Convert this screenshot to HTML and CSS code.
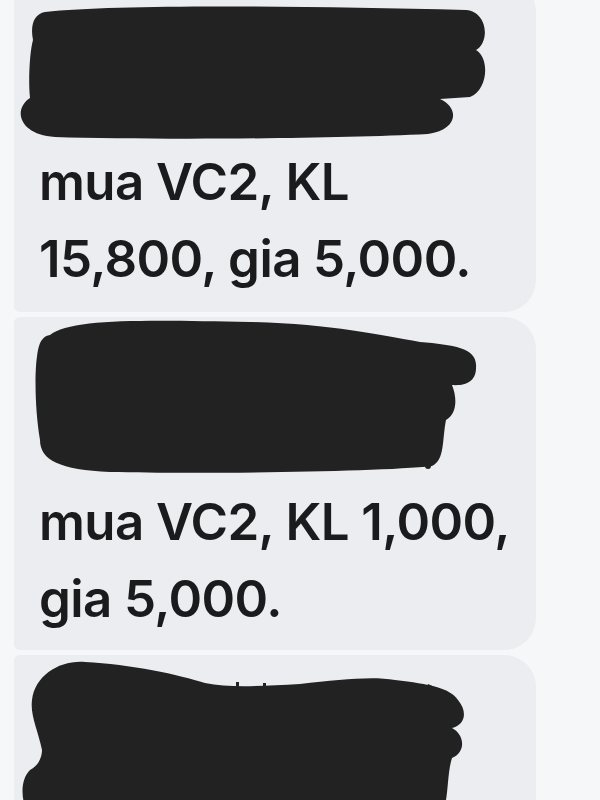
FILE: index.html
```html
<!DOCTYPE html>
<html lang="en">
<head>
  <meta charset="UTF-8" />
  <meta name="viewport" content="width=device-width, initial-scale=1.0"/>
  <title>Messages</title>
  <link rel="stylesheet" href="styles.css">
</head>
<body>
  <div class="thread">

    <div class="bubble first">
      <!-- redacted sender line -->
      <svg class="scribble s1" width="522" height="163" viewBox="0 0 522 163">
        <g transform="translate(-14,20)">
          <path d="M45 12 C120 4,300 6,466 10 C488 12,490 42,476 50 C490 58,488 90,470 97 L440 99 C460 108,458 130,428 134 C330 139,150 140,55 137 C20 135,12 110,30 98 C28 80,30 50,33 40 C30 25,34 14,45 12 Z"/>
        </g>
      </svg>
      <p class="msg">mua VC2, KL<br>15,800, gia 5,000.</p>
    </div>

    <div class="bubble middle">
      <svg class="scribble s2" width="522" height="166" viewBox="0 0 522 166">
        <g transform="translate(-14,-317)">
          <path d="M50 335 C70 318,150 320,250 322 C330 324,380 335,420 342 C455 345,478 348,476 368 C476 382,465 386,452 385 C458 400,456 415,446 420 C442 440,445 460,432 466 C380 472,200 474,110 472 C60 470,40 460,40 440 C35 410,34 370,38 350 C40 340,44 336,50 335 Z"/>
          <circle cx="428" cy="466" r="3"/>
        </g>
      </svg>
      <p class="msg">mua VC2, KL 1,000,<br>gia 5,000.</p>
    </div>

    <div class="bubble last">
      <svg class="scribble s3" width="522" height="160" viewBox="0 0 522 160">
        <g transform="translate(-14,-655)">
          <path d="M32 700 C35 675,60 660,85 662 C130 664,180 675,205 683 C230 688,260 686,300 684 C340 680,370 676,395 680 C430 684,450 688,458 700 C468 712,465 725,452 728 C465 735,466 752,452 758 C448 770,448 790,446 800 L446 820 L30 820 C20 800,20 780,30 770 C40 765,42 755,42 750 C38 730,30 715,32 700 Z"/>
          <rect x="236" y="682" width="3" height="8"/>
          <rect x="263" y="683" width="3" height="7"/>
          <path d="M418 686 L422 686 L422 694 L418 694 Z M428 684 L446 692 L443 696 L426 689 Z"/>
        </g>
      </svg>
    </div>

  </div>
</body>
</html>
```

FILE: styles.css
```css
body {
  margin: 0;
  background-color: #f5f7f9;
  font-family: Inter, "Noto Sans", sans-serif;
  color: #1b1b1d;
}

.thread {
  display: flex;
  flex-direction: column;
  gap: 5px;
  margin-top: -20px;
  padding-left: 14px;
  width: 522px;
}

.bubble {
  background: #ebedf0;
  border-radius: 6px 32px 32px 6px;
  overflow: hidden;
}

.bubble.first {
  padding-bottom: 15px;
}

.bubble.middle {
  padding-bottom: 13px;
}

.bubble.last {
  height: 200px;
}

.scribble {
  display: block;
  fill: #222222;
}

.msg {
  margin: 0;
  padding-left: 25px;
  font-size: 51px;
  font-weight: 600;
  line-height: 77px;
  letter-spacing: -0.6px;
}
```
